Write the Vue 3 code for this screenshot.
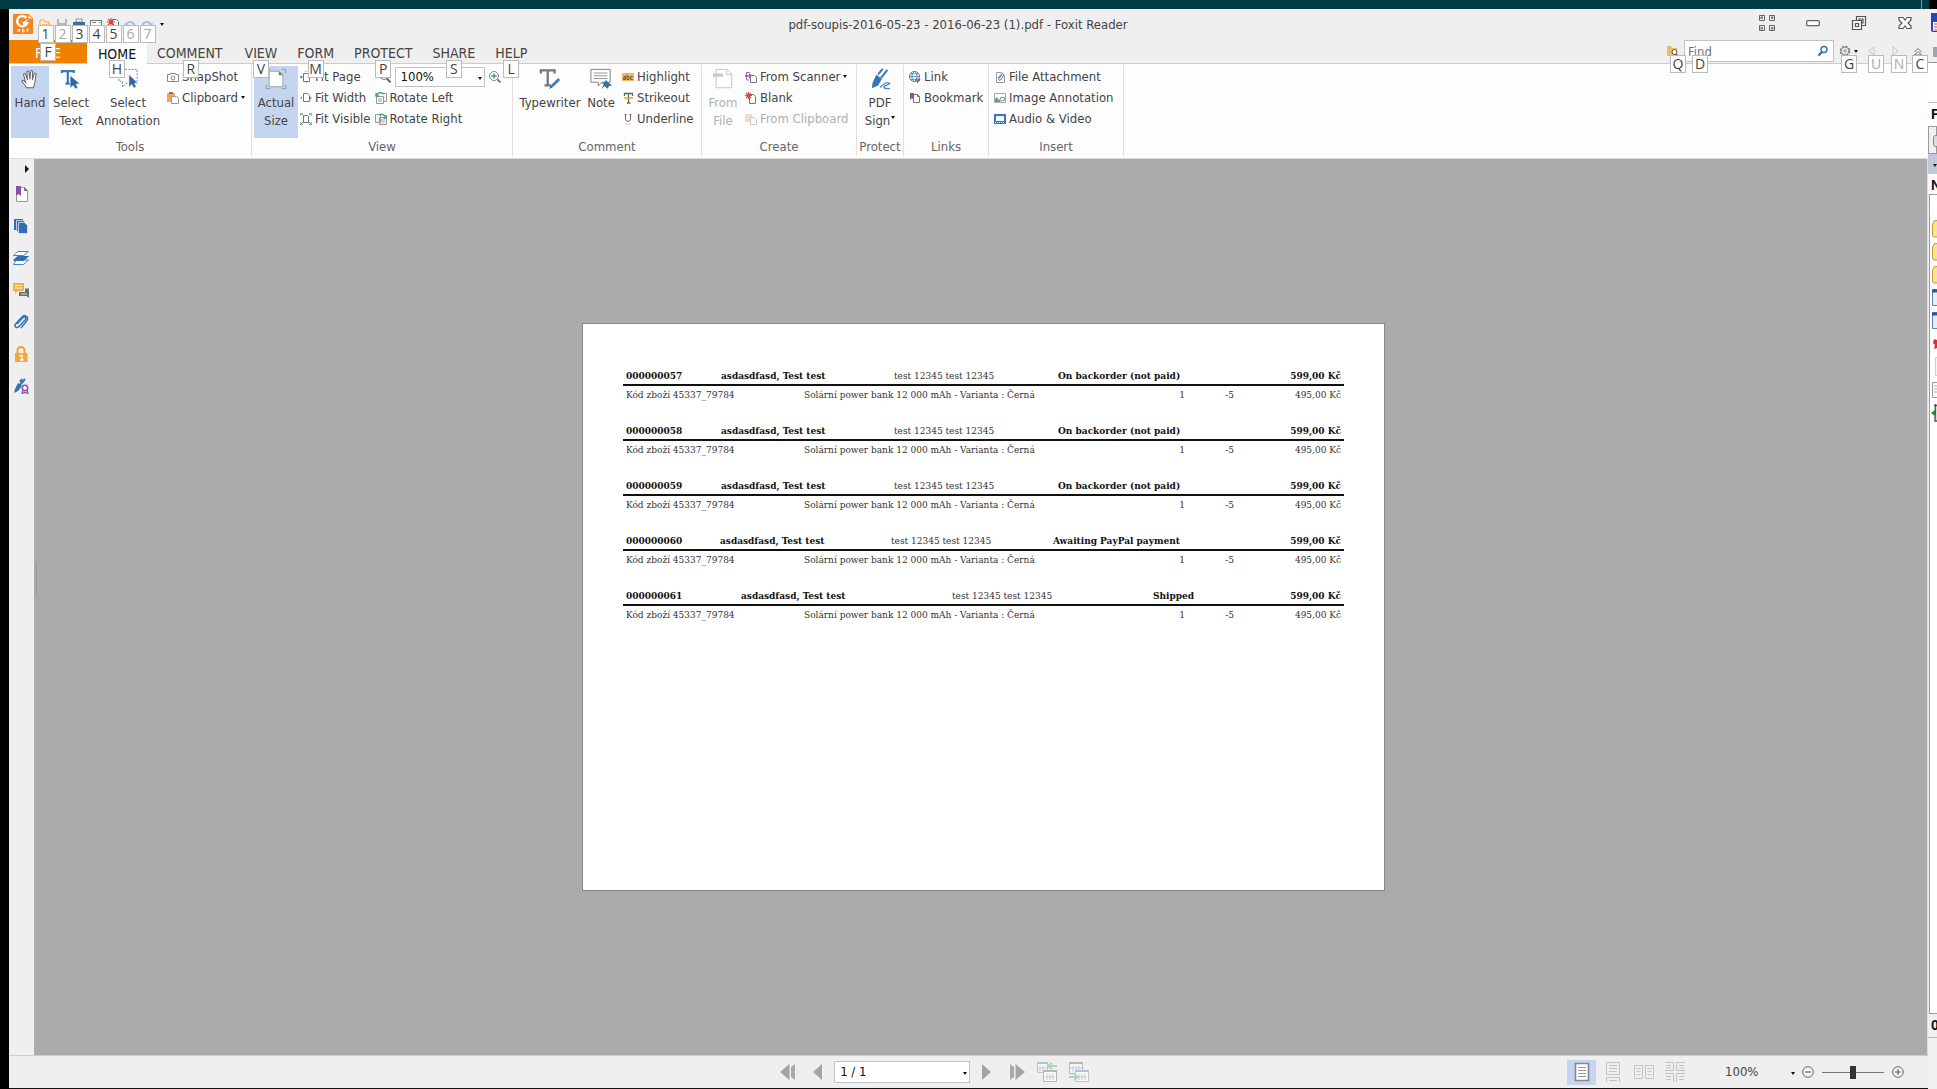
<template>
  <div class="desktop">
    <div class="desktop__top"><span></span></div>
    <div class="desktop__row">
      <main class="reader">
        <header class="titlebar">
          <div class="quick">
            <svg class="quick__logo" viewBox="0 0 20 20" v-html="icons.logo"></svg>
            <button v-for="(item, i) in quickItems" :key="item.icon" class="quick__item" :aria-label="item.label">
              <svg viewBox="0 0 12 12" v-html="icons[item.icon]"></svg>
              <kbd class="tip" :class="{ 'tip--off': item.off }">{{ i + 1 }}</kbd>
            </button>
            <button class="quick__more" aria-label="Customize toolbar"><i class="caret"></i></button>
          </div>
          <h1 class="titlebar__text">pdf-soupis-2016-05-23 - 2016-06-23 (1).pdf - Foxit Reader</h1>
          <div class="winbuttons">
            <button v-for="name in ['full', 'min', 'restore', 'close']" :key="name" :aria-label="name">
              <svg viewBox="0 0 16 16" v-html="icons[name]"></svg>
            </button>
          </div>
        </header>

        <nav class="tabs">
          <button
            v-for="tab in tabs"
            :key="tab.text"
            class="tab"
            :class="{ 'tab--file': tab.text === 'FILE', 'tab--active': tab.text === active }"
            @click="active = tab.text"
          >
            {{ tab.text }}
            <kbd class="tip">{{ tab.tip }}</kbd>
          </button>
          <div class="search">
            <button class="search__btn search__btn--folder" aria-label="Advanced search">
              <svg viewBox="0 0 12 12" v-html="icons.folderFind"></svg>
              <kbd class="tip">Q</kbd>
            </button>
            <div class="search__box">
              <input v-model="query" type="text" placeholder="Find" aria-label="Find">
              <svg viewBox="0 0 12 12" v-html="icons.find"></svg>
              <kbd class="tip">D</kbd>
            </div>
            <button class="search__btn search__btn--gear" aria-label="Options">
              <svg viewBox="0 0 12 12" v-html="icons.gear"></svg>
              <i class="caret"></i>
              <kbd class="tip">G</kbd>
            </button>
            <button class="search__btn" aria-label="Previous">
              <svg viewBox="0 0 12 12" v-html="icons.triLeft"></svg>
              <kbd class="tip tip--off">U</kbd>
            </button>
            <button class="search__btn" aria-label="Next">
              <svg viewBox="0 0 12 12" v-html="icons.triRight"></svg>
              <kbd class="tip tip--off">N</kbd>
            </button>
            <button class="search__btn search__btn--fold" aria-label="Collapse ribbon">
              <svg viewBox="0 0 12 12" v-html="icons.collapse"></svg>
              <kbd class="tip">C</kbd>
            </button>
          </div>
        </nav>

        <div class="ribbon">
          <section v-for="group in groups" :key="group.title" class="group" :class="'group--' + group.title.toLowerCase()">
            <div class="group__body">
              <button
                v-for="big in group.big"
                :key="big.icon"
                class="big"
                :class="['big--' + big.icon, { 'is-on': big.on, 'is-off': big.off }]"
              >
                <svg viewBox="0 0 24 24" v-html="icons[big.icon]"></svg>
                <span v-for="line in big.lines" :key="line">{{ line }}<i v-if="line === 'Sign'" class="caret"></i></span>
              </button>
              <div v-for="(col, c) in group.cols" :key="c" class="col">
                <template v-for="item in col" :key="item.text">
                  <div v-if="item.zoom" class="zoom">
                    <button aria-label="Zoom out"><svg viewBox="0 0 12 12" v-html="icons.zoomOut"></svg></button>
                    <label class="drop">
                      <select v-model="zoom" aria-label="Zoom"><option>100%</option><option>150%</option></select>
                    </label>
                    <button aria-label="Zoom in"><svg viewBox="0 0 12 12" v-html="icons.zoomIn"></svg></button>
                  </div>
                  <button v-else class="small" :class="{ 'is-off': item.off }">
                    <svg viewBox="0 0 12 12" v-html="icons[item.icon]"></svg>
                    {{ item.text }}
                    <i v-if="item.more" class="caret"></i>
                  </button>
                </template>
              </div>
            </div>
            <h2 class="group__title">{{ group.title }}</h2>
          </section>
        </div>

        <div class="work">
          <aside class="side">
            <button class="side__open" aria-label="Expand panel"><i></i></button>
            <button v-for="name in sideItems" :key="name" class="side__item" :aria-label="name">
              <svg viewBox="0 0 16 16" v-html="icons[name]"></svg>
            </button>
          </aside>
          <div class="canvas">
            <span class="canvas__grip"></span>
            <article class="sheet">
              <section v-for="order in orders" :key="order.id" class="order">
                <table class="order__head">
                  <colgroup><col v-for="(w, i) in order.cols" :key="i" :style="{ width: w + 'px' }"><col></colgroup>
                  <tbody>
                    <tr>
                      <th>{{ order.id }}</th>
                      <th>asdasdfasd, Test test</th>
                      <td>test 12345 test 12345</td>
                      <th>{{ order.state }}</th>
                      <th class="num">599,00 Kč</th>
                    </tr>
                  </tbody>
                </table>
                <table class="order__items">
                  <colgroup><col class="c-code"><col><col class="c-count"><col class="c-stock"><col class="c-price"></colgroup>
                  <tbody>
                    <tr>
                      <td>Kód zboží 45337_79784</td>
                      <td>Solární power bank 12 000 mAh - Varianta : Černá</td>
                      <td class="num">1</td>
                      <td class="num">-5</td>
                      <td class="num">495,00 Kč</td>
                    </tr>
                  </tbody>
                </table>
              </section>
            </article>
          </div>
        </div>

        <footer class="status">
          <div class="pager">
            <button class="pager__first" aria-label="First page"><svg viewBox="0 0 16 16" v-html="icons.first"></svg></button>
            <button class="pager__step" aria-label="Previous page"><svg viewBox="0 0 9 16" v-html="icons.prev"></svg></button>
            <label class="drop drop--page">
              <select v-model="page" aria-label="Page"><option>1 / 1</option></select>
            </label>
            <button class="pager__step" aria-label="Next page"><svg viewBox="0 0 9 16" v-html="icons.next"></svg></button>
            <button class="pager__last" aria-label="Last page"><svg viewBox="0 0 16 16" v-html="icons.last"></svg></button>
            <button class="pager__view" aria-label="Previous view"><svg viewBox="0 0 20 20" v-html="icons.viewPrev"></svg></button>
            <button class="pager__view" aria-label="Next view"><svg viewBox="0 0 20 20" v-html="icons.viewNext"></svg></button>
          </div>
          <div class="modes">
            <button v-for="name in modes" :key="name" :class="{ 'is-on': name === mode }" :aria-label="name" @click="mode = name">
              <svg viewBox="0 0 20 20" v-html="icons[name]"></svg>
            </button>
          </div>
          <label class="drop drop--plain">
            <select v-model="zoom" aria-label="Zoom level"><option>100%</option><option>150%</option></select>
          </label>
          <div class="slider">
            <button aria-label="Zoom out"><svg viewBox="0 0 12 12" v-html="icons.minus"></svg></button>
            <input v-model="level" type="range" min="0" max="100" aria-label="Zoom slider">
            <button aria-label="Zoom in"><svg viewBox="0 0 12 12" v-html="icons.plus"></svg></button>
          </div>
        </footer>
      </main>

      <!-- window lying behind, only its left edge is on screen -->
      <aside class="behind">
        <div class="behind__bar">
          <svg viewBox="0 0 8 52"><path d="M2 4h6v19H3l-1-2z" fill="#2446b8" /><path d="M4 13h4v9H4z" fill="#fff" /><path d="M5 15h3M5 18h3M5 21h3" stroke="#d33" /><path d="M4 38h4v10H4z" fill="#9aa5ad" /></svg>
        </div>
        <div class="behind__blank"></div>
        <b class="behind__name">F</b>
        <div class="behind__drive"><svg viewBox="0 0 8 26"><rect x="3.500" y="8.500" width="8" height="11" rx="2" fill="#dcdce4" stroke="#888" /></svg></div>
        <div class="behind__sort"><i class="caret"></i></div>
        <b class="behind__name behind__name--col">N</b>
        <ul class="behind__list">
          <li v-for="(name, i) in behindItems" :key="i"><svg viewBox="0 0 8 23" v-html="icons[name]"></svg></li>
        </ul>
        <b class="behind__name behind__name--foot">0</b>
        <div class="behind__foot"></div>
      </aside>
    </div>
  </div>
</template>

<script setup>
import { ref } from 'vue'

const active = ref('HOME')
const query = ref('')
const zoom = ref('100%')
const page = ref('1 / 1')
const level = ref(50)
const mode = ref('single')

const quickItems = [
  { icon: 'open', label: 'Open' },
  { icon: 'save', label: 'Save', off: true },
  { icon: 'print', label: 'Print' },
  { icon: 'mail', label: 'E-mail' },
  { icon: 'create', label: 'New' },
  { icon: 'undo', label: 'Undo', off: true },
  { icon: 'redo', label: 'Redo', off: true },
]

const tabs = [
  { text: 'FILE', tip: 'F' },
  { text: 'HOME', tip: 'H' },
  { text: 'COMMENT', tip: 'R' },
  { text: 'VIEW', tip: 'V' },
  { text: 'FORM', tip: 'M' },
  { text: 'PROTECT', tip: 'P' },
  { text: 'SHARE', tip: 'S' },
  { text: 'HELP', tip: 'L' },
]

const groups = [
  {
    title: 'Tools',
    big: [
      { icon: 'hand', lines: ['Hand'], on: true },
      { icon: 'selectText', lines: ['Select', 'Text'] },
      { icon: 'selectNote', lines: ['Select', 'Annotation'] },
    ],
    cols: [[{ icon: 'camera', text: 'SnapShot' }, { icon: 'clipboard', text: 'Clipboard', more: true }]],
  },
  {
    title: 'View',
    big: [{ icon: 'actual', lines: ['Actual', 'Size'], on: true }],
    cols: [
      [{ icon: 'fitPage', text: 'Fit Page' }, { icon: 'fitWidth', text: 'Fit Width' }, { icon: 'fitVisible', text: 'Fit Visible' }],
      [{ zoom: true, text: 'zoom' }, { icon: 'rotateLeft', text: 'Rotate Left' }, { icon: 'rotateRight', text: 'Rotate Right' }],
    ],
  },
  {
    title: 'Comment',
    big: [{ icon: 'typewriter', lines: ['Typewriter'] }, { icon: 'note', lines: ['Note'] }],
    cols: [[{ icon: 'highlight', text: 'Highlight' }, { icon: 'strikeout', text: 'Strikeout' }, { icon: 'underline', text: 'Underline' }]],
  },
  {
    title: 'Create',
    big: [{ icon: 'fromFile', lines: ['From', 'File'], off: true }],
    cols: [[{ icon: 'scanner', text: 'From Scanner', more: true }, { icon: 'blank', text: 'Blank' }, { icon: 'fromClip', text: 'From Clipboard', off: true }]],
  },
  { title: 'Protect', big: [{ icon: 'sign', lines: ['PDF', 'Sign'] }], cols: [] },
  { title: 'Links', big: [], cols: [[{ icon: 'link', text: 'Link' }, { icon: 'mark', text: 'Bookmark' }]] },
  {
    title: 'Insert',
    big: [],
    cols: [[{ icon: 'attach', text: 'File Attachment' }, { icon: 'image', text: 'Image Annotation' }, { icon: 'video', text: 'Audio & Video' }]],
  },
]

const sideItems = ['bookmarks', 'pages', 'layers', 'comments', 'attachments', 'security', 'signatures']
const modes = ['single', 'continuous', 'facing', 'contFacing']
const behindItems = ['dir', 'dir', 'dir', 'app', 'app', 'red', 'faint', 'doc', 'trash']

const orders = [
  { id: '000000057', state: 'On backorder (not paid)', cols: [95, 173, 164, 150] },
  { id: '000000058', state: 'On backorder (not paid)', cols: [95, 173, 164, 150] },
  { id: '000000059', state: 'On backorder (not paid)', cols: [95, 173, 164, 150] },
  { id: '000000060', state: 'Awaiting PayPal payment', cols: [94, 171, 162, 150] },
  { id: '000000061', state: 'Shipped', cols: [115, 211, 201, 90] },
]

const sheetOutline = '<path d="M4.500 2.500h4l2 2v6h-6z" fill="#fff" stroke="#777"/><path d="M8.500 2.500v2h2" fill="none" stroke="#777"/>'

const icons = {
  // title bar
  logo: '<path d="M0 0h15l5 5v15H0z" fill="#f5861f"/><path d="M15 0l5 5h-5z" fill="#fff" stroke="#f5861f"/><path d="M13.500 4A5.200 5.200 0 1 0 14 9.500h-4" fill="none" stroke="#fff" stroke-width="2.400"/><path d="M9 9l6-4-2 4z" fill="#fff"/><path d="M5 15v3M5 15.500h2v1.500H5M9.500 15v3h1.500v-2.500zM14 18v-3h2M14 16.500h1.500" stroke="#fff" fill="none" stroke-width=".8"/>',
  open: '<path d="M1 11V2h4l1 2h4v7z" fill="#fff1cf" stroke="#e0a54a"/><path d="M1 11l2-5h9l-2 5z" fill="#f5c878"/>',
  save: '<path d="M1 1h10v10H1z" fill="#b5b5c0"/><path d="M3 1h6v4H3z" fill="#eee"/>',
  print: '<path d="M3 1h6v3H3z" fill="#fff" stroke="#888"/><path d="M0 4h12v6H0z" fill="#3f6ea5"/><path d="M3 7h6v4H3z" fill="#fff"/>',
  mail: '<rect x=".5" y="2.500" width="11" height="8" fill="#fff" stroke="#777"/><path d="M2 4.500h4M9 4.500h1.500M3 7.500h5" stroke="#777"/>',
  create: '<path d="M5.500 1.500h4l2 2v8h-6z" fill="#fff" stroke="#777"/><path d="M4 0v8M0 4h8M1 1l6 6M7 1L1 7" stroke="#d64535" stroke-width="1.200"/>',
  undo: '<path d="M2 7a4.500 4.500 0 0 1 8.500 0v3" fill="none" stroke="#a9bfdc" stroke-width="2"/><path d="M0 5l1 5 4-3z" fill="#a9bfdc"/>',
  redo: '<path d="M1.500 10V7A4.500 4.500 0 0 1 10 7" fill="none" stroke="#a9bfdc" stroke-width="2"/><path d="M12 5l-1 5-4-3z" fill="#a9bfdc"/>',
  full: '<g fill="none" stroke="#666"><path d="M.5.500h5v5h-5zM10.500.500h5v5h-5zM.5 10.500h5v5h-5zM10.500 10.500h5v5h-5z"/><path d="M2 2l2 2M2 4V2h2M14 2l-2 2M12 2h2v2M2 14l2-2M2 12v2h2M14 14l-2-2M12 14h2v-2"/></g>',
  min: '<rect x="1.700" y="5.700" width="12.600" height="5" rx="1" fill="#fff" stroke="#666" stroke-width="1.300"/>',
  restore: '<g fill="#f5f5f5" stroke="#555" stroke-width="1.200"><path d="M5.500 1.500h9v9h-9z"/><path d="M8 4h4v4H8z"/><path d="M1.500 5.500h9v9h-9z"/><path d="M4.500 8.500h3v3h-3z"/></g>',
  close: '<path d="M2 2.500h4l2 2.500 2-2.500h4v2.500L11 8l3 3v2.500h-4L8 11l-2 2.500H2V11l3-3-3-3z" fill="#fff" stroke="#555" stroke-width="1.200"/>',
  // search area
  folderFind: '<path d="M0 11V1h4l1 2h5v8z" fill="#f0bd64"/><circle cx="7.500" cy="7" r="2.500" fill="#fff" stroke="#555"/><path d="M9 9l2.500 2.500" stroke="#555" stroke-width="1.500"/>',
  find: '<circle cx="7" cy="4.500" r="3" fill="#fff" stroke="#2d6fc0" stroke-width="1.400"/><path d="M5 7l-3.500 3.500" stroke="#2d5fae" stroke-width="2"/>',
  gear: '<circle cx="6" cy="6" r="4.500" fill="none" stroke="#777" stroke-width="1.600" stroke-dasharray="2.300 1.200"/><circle cx="6" cy="6" r="3.800" fill="#f4f4f4" stroke="#888"/><circle cx="6" cy="6" r="1.200" fill="none" stroke="#777" stroke-width=".8"/>',
  triLeft: '<path d="M8 2v8L3 6z" fill="#f4f4f4" stroke="#c4c4c4"/>',
  triRight: '<path d="M4 2v8l5-4z" fill="#f4f4f4" stroke="#c4c4c4"/>',
  collapse: '<path d="M2.500 7L6 3.500 9.500 7M2.500 10L6 6.500 9.500 10z" fill="#fff" stroke="#666"/>',
  // ribbon, large
  hand: '<path d="M8 21.500c-1-3-3-4-4.500-6.500-.8-1.300.5-2.200 1.700-1.200L7.500 16 5 7.500c-.4-1.700 1.600-2.200 2.100-.6L9.300 13 8.700 4.500c0-1.700 2-1.700 2.200-.1l.9 8.100.9-8.600c.2-1.500 2.100-1.400 2.100.2l-.3 9 2.100-6.800c.5-1.500 2.300-.9 2 .7L17.400 15c-.4 2.600-.9 4-1.700 6.500z" fill="#fff" stroke="#666" stroke-width="1.100"/>',
  selectText: '<path d="M2 5.500V3.500h13v2M8.500 4v13M6 17h5" fill="none" stroke="#3a78b8" stroke-width="2.400"/><path d="M11 8v14l3.500-3 2 4 3-1.500-2-4H22z" fill="#2f64a0" stroke="#fff" stroke-width=".7"/>',
  selectNote: '<path d="M2 1.500h20v13M2 1.500v13h4v6l6-5" fill="none" stroke="#4a7fbd" stroke-dasharray="2 1.500"/><path d="M13 7v14l3.300-3 2 4 2.700-1.500-2-4h4z" fill="#2f64a0" stroke="#fff" stroke-width=".6"/>',
  actual: '<path d="M4.500 3.500h11l4 4v13h-15z" fill="#fff" stroke="#999"/><path d="M15 3.500V8h4.500z" fill="#777"/><path d="M1.500 6V1.500H6M18 1.500h4.500V6M1.500 18v4.500H6M18 22.500h4.500V18" fill="none" stroke="#69a9a4"/>',
  typewriter: '<path d="M2 6V2.500h15V6M9.500 3v16M6 19h7" fill="none" stroke="#777" stroke-width="2.500"/><path d="M22 12l-8 8" stroke="#397cc0" stroke-width="3"/><path d="M13 19l-2 4 4-2z" fill="#245a96"/>',
  note: '<path d="M1 1.500h21v14h-9l-4 4v-4H1z" fill="#fff" stroke="#777"/><path d="M4 5.500h15M4 8.500h15M4 11.500h15" stroke="#888"/><path d="M17 13l7 6-3 .5-2 3-3-3-3.500 3.500 2.500-5-2-2 3.500-.5z" fill="#2f6fae"/>',
  fromFile: '<path d="M4.500 1.500h12l5 5v15h-17z" fill="#fff" stroke="#c4bfc8"/><path d="M16 1.500v5.500h5.500" fill="none" stroke="#c4bfc8"/><path d="M1 6h11v3.500H1z" fill="#cfc0df"/>',
  sign: '<path d="M20 2l-7 9M15 1l-5 6" stroke="#3474b8" stroke-width="2"/><path d="M8 7l6 5-4 7-7 3 1-6z" fill="#3474b8"/><path d="M12 21c3-1 4-5 8-5s2 2-1 3-5 4 4 3.500" fill="none" stroke="#4a87c5" stroke-width="1.500"/>',
  // ribbon, small
  camera: '<path d="M.5 3.500h3v-1h5v1h3v7H.5z" fill="#fff" stroke="#888"/><circle cx="6" cy="7" r="2" fill="none" stroke="#888"/>',
  clipboard: '<path d="M0 1h8v9H0z" fill="#eda95c"/><path d="M2 0h4v2H2z" fill="#777"/><path d="M4.500 4.500h5l2 2v5h-7z" fill="#fff" stroke="#999"/>',
  fitPage: '<path d="M3.500 2.500h4l2 2v6h-6z" fill="#fff" stroke="#777"/><path d="M6 0v1M6 11v1M0 6l2-1v2zM12 6l-2-1v2z" stroke="#4fa28b" fill="#4fa28b"/>',
  fitWidth: '<path d="M3.500 1.500h4l2 2v6h-6z" fill="#fff" stroke="#777"/><path d="M0 6l2-1.500v3zM12 6l-2-1.500v3z" fill="#4fa28b"/>',
  fitVisible: '<path d="M3.500 2.500h4l1 1v6h-5z" fill="#fff" stroke="#777"/><path d="M0 0l3 2M12 0L9 2M0 12l3-3M12 12L9 9" stroke="#4fa28b"/><path d="M.5 3V.5H3M9 .5h2.500V3M.5 9v2.500H3M9 11.500h2.500V9" stroke="#999" fill="none" stroke-width=".7"/>',
  zoomOut: '<circle cx="5" cy="4.500" r="4" fill="#fff" stroke="#777"/><path d="M3 4.500h4" stroke="#3c9c7b"/><path d="M8 7.500l3.500 4" stroke="#666" stroke-width="2"/>',
  zoomIn: '<circle cx="5" cy="5" r="4.500" fill="#fff" stroke="#888"/><path d="M2.500 5h5M5 2.500v5" stroke="#3c9c7b" stroke-width="1.400"/><path d="M8.500 8.500l3 3" stroke="#777" stroke-width="1.800"/>',
  rotateLeft: '<path d="M1.500 4.500h7v7h-7zM7 1.500h4.500v8H9" fill="#f4f4f4" stroke="#999"/><path d="M1 4c2-4 5-4 8-2M1 1v3h3" fill="none" stroke="#3fa183" stroke-width="1.400"/><path d="M3 7h4M3 9h4" stroke="#aaa"/>',
  rotateRight: '<path d="M.5 1.500h5v8h-5zM4.500 4.500h7v7h-7z" fill="#f4f4f4" stroke="#999"/><path d="M4 2c3-2 6 0 7 3M11.500 2v3h-3" fill="none" stroke="#3fa183" stroke-width="1.400"/><path d="M6 7h4M6 9h4" stroke="#aaa"/>',
  highlight: '<path d="M0 2h12v8H0z" fill="#efb95e"/><path d="M1.500 5.500h2v3h-2V7h2M5 3.500v5h2v-3H5M10.800 5.500h-2v3h2" fill="none" stroke="#665030" stroke-width=".9"/>',
  strikeout: '<path d="M2.500 4V1.500h8V4M6.500 2v9M5 11h3.500" fill="none" stroke="#666" stroke-width="1.300"/><path d="M2 6h9" stroke="#e7a03c" stroke-width="1.500"/>',
  underline: '<path d="M3.500 1v5c0 3 5 3 5 0V1M2.500 1.500h2M7.500 1.500h2" fill="none" stroke="#666"/><path d="M3 11h6" stroke="#e9c58c"/>',
  scanner: '<path d="M1 1.500h4M1.500 1v8H4" fill="none" stroke="#a26bb8"/><path d="M0 5h7M4 3l3 2-3 2" fill="none" stroke="#9455ac" stroke-width="1.500"/><path d="M5.500 4.500h4l2 2v5h-6z" fill="#fff" stroke="#777"/>',
  blank: '<path d="M4.500 2.500h4l2 2v7h-6z" fill="#fff" stroke="#777"/><path d="M3.500 0v7M0 3.500h7M1 1l5 5M6 1L1 6" stroke="#d64b36" stroke-width="1.100"/>',
  fromClip: '<path d="M0 1h7v8H0z" fill="#f3dcc0"/><path d="M5.500 4.500h4l2 2v5h-6z" fill="#fff" stroke="#c8c8c8"/>',
  link: '<circle cx="5.500" cy="5.500" r="5" fill="#fff" stroke="#3a78b8"/><path d="M.5 5.500h10M5.500.500c-3.500 3-3.500 7 0 10M5.500.500c3.500 3 3.500 7 0 10M1.500 2.800h8M1.500 8.200h5" fill="none" stroke="#3a78b8" stroke-width=".8"/><path d="M6.500 9.500l2-2M8 11.500l3-3.500" stroke="#666" stroke-width="1.600"/>',
  mark: sheetOutline + '<path d="M1 1h4v7L3 6 1 8z" fill="#8b4fa5"/>',
  attach: '<path d="M2.500 1.500h5l3 3v7h-8z" fill="#fff" stroke="#999"/><path d="M8 4L5 7.500c-1 1.500.5 2.500 1.500 1.500L9 5.500c1.500-2-.5-4-2-2L4 7" fill="none" stroke="#3474b8"/>',
  image: '<path d="M.5 1.500h11v9H.5z" fill="#fff" stroke="#aaa"/><path d="M1 10V7l2-2 2 3 1-1v3z" fill="#5aa88b"/><path d="M6.500 5.500h4v3h-2l-1.500 1z" fill="#fff" stroke="#777" stroke-width=".8"/>',
  video: '<path d="M0 1h12v10H0z" fill="#3b79bd"/><path d="M2 3h8v5H2z" fill="#eef5fc"/><path d="M1 9.500h10" stroke="#fff" stroke-dasharray="1 1"/>',
  // side panel
  bookmarks: '<path d="M3.500 1.500h8l3 3v11h-11z" fill="#fff" stroke="#999"/><path d="M11 1v4h4z" fill="#777"/><path d="M3 0h5v10L5.500 8 3 10z" fill="#8b4fa5"/>',
  pages: '<path d="M1 1h9v11H1z" fill="#2f6db5"/><path d="M3.500 2.500h8v11h-8z" fill="#2f6db5" stroke="#dfe8f2" stroke-width=".8"/><path d="M5.500 4.500h6l3 3v8h-9z" fill="#2f6db5" stroke="#dfe8f2" stroke-width=".8"/>',
  layers: '<path d="M5 1.500h10.500l-5 4H.5z" fill="#fff" stroke="#4a84c0"/><path d="M5 6h11l-5 4H0z" fill="#2f6db5"/><path d="M3 10.500L.5 14.500h10l5-4.500H12" fill="#fff" stroke="#4a84c0"/><path d="M5 6h11l-5 5H0z" fill="#2f6db5"/>',
  comments: '<path d="M0 1h11v8H5l-3 3V9H0z" fill="#f0b04e"/><path d="M2 3.500h7M2 6h7" stroke="#fff"/><path d="M12 6.500h4V16l-2.500-2H6v-4h6z" fill="#6b6b6b"/><path d="M8 12h6" stroke="#ddd"/>',
  attachments: '<path d="M4 10l6-6.500c1.500-1.500 4 0 2.500 2L6 12.500c-2 2.200-5.500.5-3.500-2.500l6.500-7c2.500-3 7.500 0 5 3.500L8 14" fill="none" stroke="#3474b8" stroke-width="1.500"/>',
  security: '<path d="M4.500 8V4.500a3.500 3.500 0 0 1 7 0V8" fill="none" stroke="#e9a23b" stroke-width="2"/><path d="M2 7h12.500v9H2z" fill="#f0a93f"/><path d="M6.500 9.500H9V14M7 14h3.500" stroke="#fff" stroke-width="1.300" fill="none"/>',
  signatures: '<path d="M12 1L6 8M9 1L7 4" stroke="#3474b8" stroke-width="2"/><path d="M5 5l4 3-4 5-4 2 1-4z" fill="#3474b8"/><circle cx="12" cy="10" r="2.700" fill="#fff" stroke="#8b4fa5" stroke-width="1.500"/><path d="M10 12l-1 3.500 3-1 3 1-1-3.500" fill="none" stroke="#8b4fa5" stroke-width="1.200"/>',
  // status bar
  first: '<path d="M9.500 0v16L0 8z" fill="#a3a3a3"/><path d="M11 3l4-3v16l-4-3z" fill="#a9a9a9"/>',
  prev: '<path d="M9 0v16L0 8z" fill="#a3a3a3"/>',
  next: '<path d="M0 0v16l9-8z" fill="#a3a3a3"/>',
  last: '<path d="M6.500 0v16L16 8z" fill="#a3a3a3"/><path d="M1 0l4 3v10l-4 3z" fill="#a9a9a9"/>',
  viewPrev: '<path d="M.5.500h10v10H.5z" fill="#f6f6f6" stroke="#c4c4c4"/><path d="M0 1h10" stroke="#a6c4e4" stroke-width="2"/><path d="M3 4v6M6 4v6M1 6h9" stroke="#ccc"/><path d="M6.500 8.500h13v11h-13z" fill="#f8f8f8" stroke="#b5b5b5"/><path d="M6 9h14" stroke="#b8b8b8" stroke-width="2"/><path d="M10 12v6M13 12v6M16 12v6M8 15h10" stroke="#ccc"/><path d="M20 4h-8M15 1l-4 3 4 3" fill="none" stroke="#add5bd" stroke-width="2"/>',
  viewNext: '<path d="M.5.500h13v11H.5z" fill="#f6f6f6" stroke="#b5b5b5"/><path d="M0 1h14" stroke="#b8b8b8" stroke-width="2"/><path d="M4 4v6M7 4v6M10 4v6M1 6h12" stroke="#ccc"/><path d="M6.500 8.500h13v11h-13z" fill="#f8f8f8" stroke="#c4c4c4"/><path d="M6 9h14" stroke="#a6c4e4" stroke-width="2"/><path d="M10 12v6M13 12v6M16 12v6M8 15h10" stroke="#ccc"/><path d="M0 15h9M5 12l4 3-4 3" fill="none" stroke="#add5bd" stroke-width="2"/>',
  single: '<path d="M3.500 1.500h13v17h-13z" fill="#fff" stroke="#888" stroke-width="1.600"/><path d="M6 5.500h8M6 8.500h8M6 11.500h8M6 14.500h8" stroke="#999"/>',
  continuous: '<g fill="none" stroke="#c3c3c3"><path d="M3.500.500h13v12h-13zM3.500 20v-4.500h13V20M6 3.500h8M6 6.500h8M6 9.500h8M6 18.500h8"/></g>',
  facing: '<g fill="none" stroke="#c3c3c3"><path d="M.5 3.500h8v13h-8zM11.500 3.500h8v13h-8zM2.500 6.500h4M2.500 9.500h4M2.500 12.500h4M13.500 6.500h4M13.500 9.500h4M13.500 12.500h4"/></g>',
  contFacing: '<g fill="none" stroke="#c3c3c3"><path d="M0 .5h8.500v8H0M20 .5h-8.500v8H20M0 11.500h8.500V20M20 11.500h-8.500V20M1 3.500h5M1 6h5M14 3.500h5M14 6h5M1 14.500h5M1 17.500h5M14 14.500h5M14 17.500h5"/></g>',
  minus: '<circle cx="6" cy="6" r="5.300" fill="#f4f4f4" stroke="#666"/><path d="M3 6h6" stroke="#555"/>',
  plus: '<circle cx="6" cy="6" r="5.300" fill="#f4f4f4" stroke="#666"/><path d="M3 6h6M6 3v6" stroke="#555"/>',
  // list of the window behind
  dir: '<path d="M1.500 19V7l2-3.500H8V20H3z" fill="#f8e29a" stroke="#c79b3a"/>',
  app: '<path d="M1.500 3.500H9v16H1.500z" fill="#e8f0fb" stroke="#5b7fc0"/><path d="M1 5h7" stroke="#2c55a8" stroke-width="3"/>',
  red: '<path d="M3 7l3 1 2-3v14l-2-3-3 1 1-4-2-2z" fill="#d92f2f"/>',
  faint: '<path d="M4.500 2.500H9v18H4.500z" fill="#f6f6f6" stroke="#ccc"/>',
  doc: '<path d="M1.500 4.500H9v15H1.500z" fill="#fff" stroke="#999"/><path d="M3 8h5M3 11h5M3 14h5" stroke="#aaa"/>',
  trash: '<path d="M3 4.500h5M4.500 3L4 20h4" fill="#ddd" stroke="#555" stroke-width="1.500"/><path d="M0 12l4-3v6z" fill="#1c8c2c"/>',
}
</script>

<style>
html,
body {
  background: #000;
}
</style>

<style scoped>
.desktop {
  display: flex;
  flex-direction: column;
  height: 100vh;
  overflow: hidden;
  font: 13px/18px "DejaVu Sans Condensed", "DejaVu Sans", sans-serif;
  color: #444;
}
.desktop * {
  box-sizing: border-box;
}
.desktop__top {
  height: 9px;
  margin-right: 8px;
  background: #003a43;
}
.desktop__top span {
  display: block;
  width: 1px;
  height: 9px;
  margin-left: auto;
  margin-right: 7px;
  background: #7d9da1;
}
.desktop__row {
  display: flex;
  flex: 1;
  min-height: 0;
  padding-left: 9px;
}

button {
  padding: 0;
  border: 0;
  background: transparent;
  color: inherit;
  font: inherit;
}
svg {
  display: block;
  flex: none;
}

.caret {
  display: inline-block;
  border: 2px solid transparent;
  border-top: 3px solid #111;
  border-bottom: 0;
}
.tip {
  position: absolute;
  z-index: 2;
  left: 50%;
  top: 100%;
  width: 16px;
  height: 18px;
  margin-left: -8px;
  border: 1px solid #bbb;
  background: #fff;
  color: #444;
  font: 14px/16px "Open Sans", sans-serif;
  text-align: center;
}
.tip--off {
  color: #aaa;
}

.reader {
  display: flex;
  flex: 1;
  flex-direction: column;
  min-width: 0;
  border-bottom: 1px solid #111;
  background: #efefef;
}

/* title bar */
.titlebar {
  display: flex;
  align-items: flex-start;
  height: 31px;
}
.quick {
  display: flex;
  width: 163px;
  padding-left: 4px;
}
.quick__logo {
  width: 20px;
  height: 20px;
  margin: 5px 4px 0 0;
}
.quick__item {
  position: relative;
  width: 17px;
  height: 16px;
  padding: 9px 2px 0;
}
.quick__item svg {
  width: 12px;
  height: 12px;
}
.quick__more {
  width: 12px;
  height: 30px;
  padding-bottom: 4px;
}
.titlebar__text {
  flex: 1;
  margin: 0;
  padding-top: 7px;
  font-size: 13px;
  font-weight: 400;
  text-align: center;
}
.winbuttons {
  display: flex;
}
.winbuttons button {
  display: flex;
  justify-content: center;
  align-items: center;
  width: 46px;
  height: 28px;
}
.winbuttons svg {
  width: 16px;
  height: 16px;
}

/* tabs */
.tabs {
  display: flex;
  height: 24px;
  border-bottom: 1px solid #ccc;
}
.tab {
  position: relative;
  height: 23px;
  padding: 3px 10px 0;
  font-size: 14px;
  line-height: 20px;
}
.tab .tip {
  top: 20px;
}
.tab--file {
  width: 78px;
  background: #f08000;
  color: #fff;
}
.tab--file .tip {
  top: 3px;
}
.tab--active {
  width: 60px;
  height: 24px;
  background: #fdfdfd;
  color: #111;
}
.tab--active + .tab {
  padding-right: 12px;
}
.search {
  display: flex;
  margin-left: auto;
}
.search__box {
  position: relative;
  width: 150px;
  height: 22px;
}
.search__box input {
  width: 100%;
  height: 22px;
  padding: 0 24px 0 3px;
  border: 1px solid #c4c4c4;
  background: #fff;
  font: inherit;
}
.search__box svg {
  position: absolute;
  right: 5px;
  top: 5px;
  width: 12px;
  height: 12px;
}
.search__box .tip {
  left: 16px;
  top: 15px;
}
.search__btn {
  position: relative;
  display: flex;
  align-items: center;
  width: 23px;
  height: 22px;
  padding-left: 5px;
}
.search__btn svg {
  width: 12px;
  height: 12px;
}
.search__btn .tip {
  left: 15px;
  top: 15px;
}
.search__btn--folder {
  width: 17px;
  padding-left: 0;
}
.search__btn--folder .tip {
  left: 11px;
}
.search__btn--gear {
  width: 27px;
  gap: 3px;
}
.search__btn--fold {
  width: 21px;
}
.search__btn--fold .tip {
  left: 13px;
}

/* ribbon */
.ribbon {
  display: flex;
  height: 95px;
  padding: 1px 0 2px;
  background: #fdfdfd;
  border-bottom: 1px solid #ddd;
}
.group {
  display: flex;
  flex: none;
  flex-direction: column;
  padding: 1px 2px 0;
  border-right: 1px solid #e0e0e0;
}
.group__body {
  display: flex;
  height: 73px;
}
.group__title {
  margin: 0;
  color: #666;
  font-size: 13px;
  font-weight: 400;
  text-align: center;
}
.group--tools { width: 243px; }
.group--view { width: 261px; }
.group--comment { width: 189px; }
.group--create { width: 155px; }
.group--protect { width: 47px; padding: 1px 0 0; }
.group--links { width: 85px; }
.group--insert { width: 135px; }

.big {
  display: flex;
  flex-direction: column;
  align-items: center;
  width: 44px;
  padding-top: 2px;
}
.big svg {
  width: 22px;
  height: 22px;
  margin-bottom: 4px;
}
.big--hand { width: 38px; }
.big--selectNote { width: 70px; }
.big--typewriter { width: 70px; }
.big--note { width: 32px; }
.big--fromFile { width: 38px; }
.big--sign { width: 47px; }
.big .caret {
  margin-left: 1px;
  vertical-align: 6px;
}
.is-on {
  background: #c5d5f0;
}
.is-off {
  color: #b0b0b0;
}
.col {
  flex: none;
  margin-left: 3px;
}
.group--tools .col { margin-left: 4px; }
.group--view .col { margin-left: 2px; }
.group--view .col + .col { margin-left: 4px; }
.small {
  display: flex;
  align-items: center;
  gap: 3px;
  height: 21px;
  white-space: nowrap;
}
.small svg,
.zoom svg {
  width: 12px;
  height: 12px;
}
.group--comment .col { margin-left: 5px; }
.zoom {
  display: flex;
  align-items: center;
  gap: 4px;
  height: 21px;
  padding-left: 4px;
}
.drop {
  position: relative;
  width: 90px;
}
.drop::after {
  content: '';
  position: absolute;
  right: 3px;
  top: 50%;
  border: 2px solid transparent;
  border-top: 3px solid #111;
  border-bottom: 0;
}
.drop select {
  display: block;
  width: 100%;
  height: 20px;
  padding: 0 5px;
  border: 1px solid #c4c4c4;
  border-radius: 0;
  background: #fff;
  color: #111;
  font: inherit;
  appearance: none;
}

/* work area */
.work {
  display: flex;
  flex: 1;
  min-height: 0;
}
.side {
  display: flex;
  flex-direction: column;
  align-items: center;
  width: 25px;
  padding-right: 1px;
}
.side__open {
  height: 19px;
  padding: 0 0 0 12px;
}
.side__open i {
  display: block;
  border: 4px solid transparent;
  border-left: 4px solid #111;
  border-right: 0;
}
.side__item {
  width: 16px;
  height: 32px;
}
.side__item svg {
  width: 16px;
  height: 16px;
}
.canvas {
  position: relative;
  display: flex;
  flex: 1;
  justify-content: center;
  align-items: center;
  padding-left: 6px;
  border-right: 1px solid #ddd;
  background: #ababab;
}
.canvas__grip {
  position: absolute;
  left: 2px;
  top: 45%;
  width: 1px;
  height: 32px;
  background: #999;
}
.sheet {
  width: 803px;
  height: 568px;
  padding: 44px 40px;
  border: 1px solid #888;
  background: #fff;
  color: #333;
  font: 10px/16px "DejaVu Serif Condensed", "DejaVu Serif", serif;
}
.order {
  height: 55px;
}
.order table {
  width: 100%;
  border-collapse: collapse;
  table-layout: fixed;
}
.order th,
.order td {
  padding: 0 3px;
  text-align: left;
  white-space: nowrap;
}
.order th {
  color: #111;
}
.order .num {
  text-align: right;
}
.order__head {
  border-bottom: 2px solid #111;
}
.order__items td {
  padding-top: 1px;
}
.c-code { width: 178px; }
.c-count { width: 100px; }
.c-stock { width: 49px; }
.c-price { width: 107px; }

/* status bar */
.status {
  display: flex;
  align-items: center;
  height: 33px;
  border-top: 1px solid #ccc;
}
.status::before {
  content: '';
  flex: 99;
}
.pager {
  display: flex;
  flex: 101;
  align-items: center;
  gap: 12px;
}
.pager button,
.pager svg {
  width: 16px;
  height: 16px;
}
.pager .pager__step,
.pager__step svg {
  width: 9px;
}
.pager .pager__view,
.pager__view svg {
  width: 20px;
  height: 20px;
}
.pager__first {
  margin-right: 5px;
}
.pager__last {
  margin-left: 6px;
}
.drop--page {
  width: 136px;
}
.drop--page select {
  height: 22px;
}
.modes {
  display: flex;
  gap: 2px;
}
.modes button {
  display: flex;
  justify-content: center;
  align-items: center;
  width: 29px;
  height: 25px;
}
.modes svg {
  width: 20px;
  height: 20px;
}
.drop--plain {
  width: 78px;
  margin-left: 31px;
}
.drop--plain select {
  border: 0;
  background: transparent;
  color: #444;
}
.slider {
  display: flex;
  align-items: center;
  gap: 8px;
  padding: 0 24px 0 4px;
}
.slider svg {
  width: 12px;
  height: 12px;
}
.slider input {
  width: 62px;
  height: 14px;
  margin: 0;
  background: linear-gradient(#777, #777) center / 100% 1px no-repeat;
  appearance: none;
}
.slider input::-webkit-slider-thumb {
  width: 6px;
  height: 13px;
  background: #333;
  appearance: none;
}

/* window behind */
.behind {
  display: flex;
  flex-direction: column;
  width: 9px;
  overflow: hidden;
  background: #f0f0f0;
  color: #111;
}
.behind svg {
  width: 8px;
  margin-left: 1px;
}
.behind__bar {
  height: 54px;
  border-bottom: 1px solid #999;
}
.behind__blank {
  height: 40px;
  border-bottom: 1px solid #bbb;
  background: #fff;
}
.behind__name {
  height: 23px;
  padding-left: 3px;
  background: #fff;
  font: bold 14px/22px "Liberation Sans", sans-serif;
}
.behind__drive {
  height: 28px;
  border: 1px solid #999;
}
.behind__sort {
  height: 20px;
  padding-left: 5px;
  background: #bccbd9;
}
.behind__name--col {
  height: 20px;
}
.behind__list {
  flex: 1;
  margin: 0 0 0 1px;
  padding: 22px 0 0;
  border: solid #999;
  border-width: 1px 0 1px 1px;
  background: #fff;
  list-style: none;
}
.behind__list li {
  height: 23px;
}
.behind__list svg {
  height: 23px;
}
.behind__name--foot {
  background: #f0f0f0;
}
.behind__foot {
  height: 52px;
  border-top: 1px solid #bbb;
}
</style>
